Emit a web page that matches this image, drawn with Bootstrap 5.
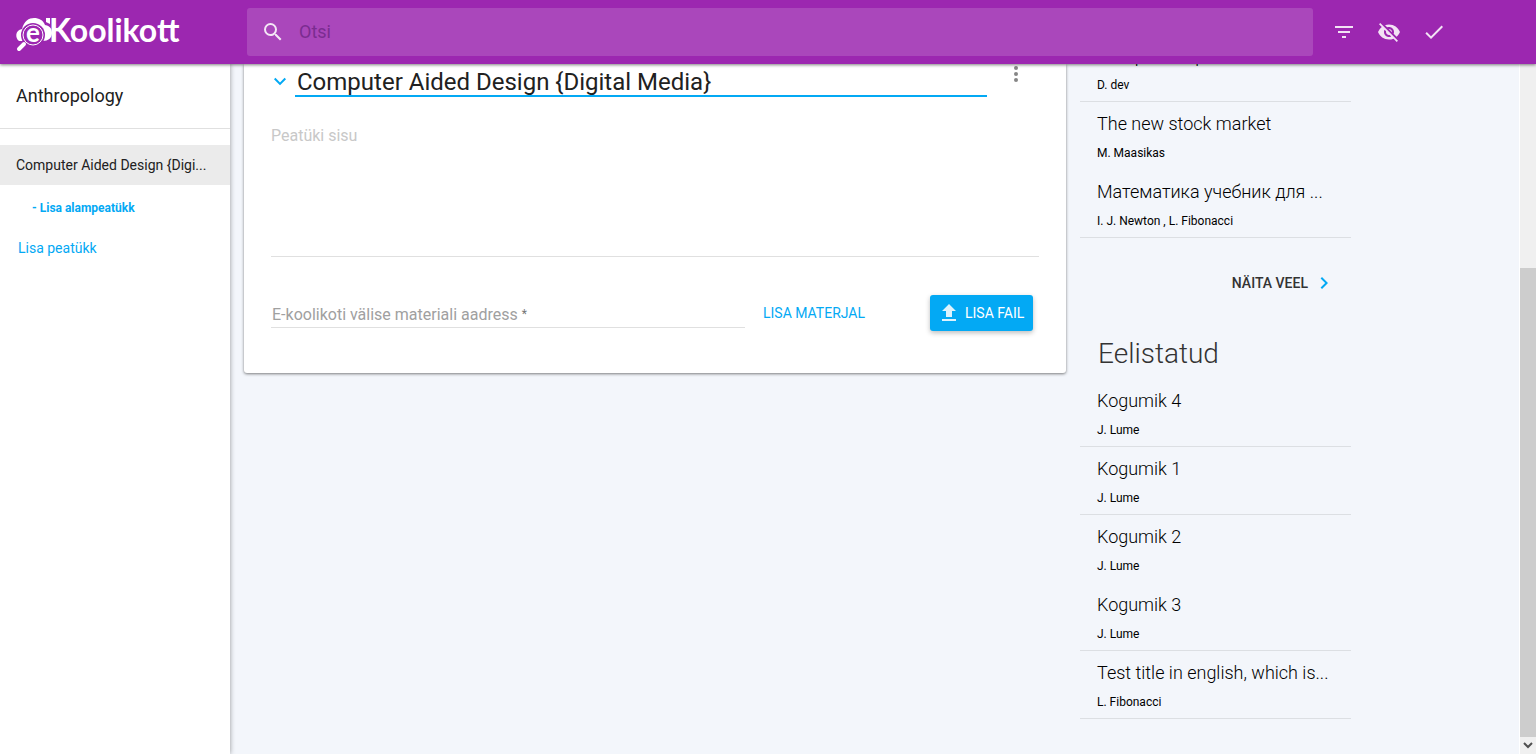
<!DOCTYPE html>
<html lang="et">
<head>
<meta charset="utf-8">
<meta name="viewport" content="width=device-width, initial-scale=1">
<title>e-Koolikott</title>
<link rel="stylesheet" href="https://cdn.jsdelivr.net/npm/bootstrap@5.3.0/dist/css/bootstrap.min.css">
<style>
body{font-family:Roboto,"Liberation Sans",sans-serif;font-size:14px;line-height:20px;color:#212121;background:#f3f6fb}
a{text-decoration:none}
.shell{height:100vh}
.topbar{height:64px;background:#9c27b0;box-shadow:0 1px 3px rgba(0,0,0,.5);z-index:10;color:#fff}
.brand-box{width:247px;padding-left:14px;color:#fff}
.brand-text{font-family:Lato,sans-serif;font-weight:700;font-size:32px;line-height:32px;margin-left:-5px;padding-bottom:4px}
.search-box{max-width:1066px;height:48px;background:rgba(255,255,255,.15);border-radius:3px;padding-left:14px}
.search-box input{font-size:18px;background:none;border:0;outline:0;padding:0 0 0 14px;color:#fff}
.search-box input::placeholder{color:#7b2c90;opacity:1}
.icon-btn{background:none;border:0;padding:0;width:24px;height:24px;line-height:0;color:#fff;opacity:.87}
.actions{padding-left:19px;gap:21px}
.accent{color:#03a9f4;opacity:1}
.side{width:230px;background:#fff;box-shadow:0 0 5px rgba(0,0,0,.4);z-index:2}
.side h2{font-size:18px;line-height:24px;font-weight:400;padding:20px 16px;margin:0;border-bottom:1px solid #e0e0e0}
.chapter{background:#ebebeb;color:#212121;height:40px;line-height:40px;padding:0 16px;margin-top:16px}
.sub-link{font-size:12px;font-weight:700;padding:13px 32px 0}
.add-link{font-size:14px;padding:20px 18px 0}
.stage{padding-left:14px;overflow:hidden}
.columns{max-width:1107px;gap:14px}
.sheet{background:#fff;border-radius:0 0 3px 3px;box-shadow:0 1px 3px rgba(0,0,0,.5);padding:0 27px 42px}
.fold{margin:6px 3px 0 -3px}
.dots{color:#757575;margin:-2px 0 0 17px}
.title-input{font-size:24px;line-height:28px;height:33px;border:0;border-bottom:2px solid #03a9f4;padding:4px 2px 0;outline:0;color:#212121;max-width:692px;border-radius:0}
.body-input{height:134px;margin-top:26px;border:0;border-bottom:1px solid #e0e0e0;padding:1px 0 0;resize:none;outline:0;font-size:16px;line-height:24px}
.body-input::placeholder{color:#c8c8c8}
.url-row{margin-top:38px}
.url-field{max-width:474px;height:33px}
.url-field input{border:0;border-bottom:1px solid #e0e0e0;outline:0;height:33px;padding:6px 1px 0;font-size:16px}
.url-field label{left:1px;top:8px;font-size:16px;line-height:24px;color:#a0a0a0;pointer-events:none}
.url-field label span{font-size:12px;line-height:16px;padding-left:4px;color:#757575;vertical-align:2px}
.flat{background:none;border:0;height:36px;padding:0;margin-left:18px}
.raised{background:#03a9f4;color:#fff;border:0;border-radius:3px;height:36px;width:103px;padding:0 0 0 7px;gap:4px;box-shadow:0 2px 5px rgba(0,0,0,.26);margin-right:6px}
.raised svg{opacity:.87}
.feed{width:271px;flex:none;margin-top:-30px}
.entry{display:block;color:#000;height:68px;padding:8px 16px 0 17px;border-bottom:1px solid transparent}
.entry.ruled{border-color:#dcdfe3}
.entry-title{font-size:18px;line-height:28px;font-weight:300}
.entry-by{font-size:12px;line-height:16px;margin-top:7px}
.more{height:89px;padding-right:15px;gap:4px;font-weight:500;color:#333}
.feed h3{font-size:28px;line-height:36px;font-weight:300;margin:9px 0 7px 18px;color:#333}
.scroller{width:17px;background:#f0f0f0;border-left:1px solid #fff}
.scroller .thumb{background:#cdcdcd;margin-top:204px}
</style>
</head>
<body>
<div class="shell d-flex flex-column overflow-hidden">
<header class="topbar d-flex align-items-center flex-shrink-0 position-relative">
<a href="#" class="brand-box d-flex align-items-center flex-shrink-0">
<svg width="40" height="40" viewBox="0 0 40 40" fill="#fff">
<path d="M5 29C1 26 1 18 8 17 10 9 15 6 20 6c5 0 9 2 11 7 6 1 7 5 7 8 0 5-4 8-9 8z"/>
<path d="M32 6h4v6l-4-2z"/>
<circle cx="19" cy="23" r="12" fill="#9c27b0"/>
<circle cx="19" cy="23" r="10" fill="none" stroke="#fff" stroke-width="1"/>
<path d="M11 31l-7 7" stroke="#9c27b0" stroke-width="7"/>
<path d="M10 32l-5 5" stroke="#fff" stroke-width="4" stroke-linecap="round"/>
<text x="19" y="30" text-anchor="middle" font-family="Lato,sans-serif" font-weight="700" font-size="26">e</text>
</svg>
<span class="brand-text">Koolikott</span></a>
<div class="search-box d-flex align-items-center flex-grow-1">
<button class="icon-btn" aria-label="Otsi"><svg width="24" height="24" viewBox="0 0 24 24" fill="currentColor"><path d="M15.5 14h-.79l-.28-.27A6.47 6.47 0 0 0 16 9.500 6.500 6.500 0 1 0 9.500 16c1.610 0 3.090-.590 4.230-1.570l.27.28v.79l5 4.990L20.490 19l-4.990-5zm-6 0a4.500 4.500 0 1 1 0-9 4.500 4.500 0 0 1 0 9z"/></svg></button>
<input type="text" class="flex-grow-1" placeholder="Otsi" aria-label="Otsi">
</div>
<div class="actions d-flex">
<button class="icon-btn" aria-label="Filter"><svg width="24" height="24" viewBox="0 0 24 24" fill="currentColor"><path d="M10 18h4v-2h-4v2zM3 6v2h18V6H3zm3 7h12v-2H6v2z"/></svg></button>
<button class="icon-btn" aria-label="Peida"><svg width="24" height="24" viewBox="0 0 24 24" fill="currentColor"><path d="M12 7c2.76 0 5 2.24 5 5 0 .65-.13 1.26-.36 1.83l2.92 2.92c1.51-1.26 2.7-2.89 3.43-4.75-1.73-4.39-6-7.5-11-7.5-1.4 0-2.74.25-3.98.7l2.16 2.16C10.74 7.13 11.35 7 12 7zM2 4.27l2.28 2.28.46.46A11.8 11.8 0 0 0 1 12c1.73 4.39 6 7.5 11 7.5 1.55 0 3.03-.3 4.38-.84l.42.42L19.73 22 21 20.73 3.27 3 2 4.27zM7.53 9.8l1.55 1.55c-.05.21-.08.43-.08.65 0 1.66 1.34 3 3 3 .22 0 .44-.03.65-.08l1.55 1.55c-.67.33-1.41.53-2.2.53-2.76 0-5-2.24-5-5 0-.79.2-1.53.53-2.2zm4.31-.78 3.15 3.15.02-.16c0-1.66-1.34-3-3-3l-.17.01z"/></svg></button>
<button class="icon-btn" aria-label="Valmis"><svg width="24" height="24" viewBox="0 0 24 24" fill="currentColor"><path d="M9 16.17 4.83 12l-1.42 1.41L9 19 21 7l-1.41-1.41z"/></svg></button>
</div>
</header>
<div class="d-flex flex-grow-1">
<nav class="side flex-shrink-0 d-flex flex-column position-relative">
<h2>Anthropology</h2>
<a href="#" class="chapter text-nowrap">Computer Aided Design {Digi...</a>
<a href="#" class="sub-link accent">- Lisa alampeatükk</a>
<a href="#" class="add-link accent">Lisa peatükk</a>
</nav>
<main class="stage flex-grow-1">
<div class="columns d-flex align-items-start">
<section class="sheet flex-grow-1">
<div class="d-flex">
<button class="icon-btn accent fold" aria-label="Ahenda"><svg width="24" height="24" viewBox="0 0 24 24" fill="currentColor"><path d="M7.41 7.84 12 12.42l4.59-4.58L18 9.25l-6 6-6-6z"/></svg></button>
<input class="title-input flex-grow-1" type="text" aria-label="Pealkiri" value="Computer Aided Design {Digital Media}">
<button class="icon-btn dots" aria-label="Menüü"><svg width="24" height="24" viewBox="0 0 24 24" fill="currentColor"><path d="M12 8a2 2 0 1 0 0-4 2 2 0 0 0 0 4zm0 2a2 2 0 1 0 0 4 2 2 0 0 0 0-4zm0 6a2 2 0 1 0 0 4 2 2 0 0 0 0-4z"/></svg></button>
</div>
<textarea class="body-input d-block w-100" placeholder="Peatüki sisu" aria-label="Peatüki sisu"></textarea>
<div class="url-row d-flex">
<div class="url-field flex-grow-1 position-relative"><input id="url" class="w-100" type="text"><label for="url" class="position-absolute">E-koolikoti välise materiali aadress<span>*</span></label></div>
<button class="flat accent">LISA MATERJAL</button>
<button class="raised ms-auto d-flex align-items-center"><svg width="24" height="24" viewBox="0 0 24 24" fill="currentColor"><path d="M9 16h6v-6h4l-7-7-7 7h4zm-4 2h14v2H5z"/></svg>LISA FAIL</button>
</div>
</section>
<aside class="feed">
<a href="#" class="entry ruled"><div class="entry-title">Computer repair</div><div class="entry-by">D. dev</div></a>
<a href="#" class="entry"><div class="entry-title">The new stock market</div><div class="entry-by">M. Maasikas</div></a>
<a href="#" class="entry ruled"><div class="entry-title">Математика учебник для ...</div><div class="entry-by">I. J. Newton , L. Fibonacci</div></a>
<a href="#" class="more d-flex align-items-center justify-content-end">NÄITA VEEL<svg class="accent" width="24" height="24" viewBox="0 0 24 24" fill="currentColor"><path d="M10 6 8.590 7.410 13.170 12l-4.580 4.590L10 18l6-6z"/></svg></a>
<h3>Eelistatud</h3>
<a href="#" class="entry ruled"><div class="entry-title">Kogumik 4</div><div class="entry-by">J. Lume</div></a>
<a href="#" class="entry ruled"><div class="entry-title">Kogumik 1</div><div class="entry-by">J. Lume</div></a>
<a href="#" class="entry"><div class="entry-title">Kogumik 2</div><div class="entry-by">J. Lume</div></a>
<a href="#" class="entry ruled"><div class="entry-title">Kogumik 3</div><div class="entry-by">J. Lume</div></a>
<a href="#" class="entry ruled"><div class="entry-title">Test title in english, which is...</div><div class="entry-by">L. Fibonacci</div></a>
</aside>
</div>
</main>
<div class="scroller d-flex flex-column flex-shrink-0"><div class="thumb flex-grow-1"></div><svg width="16" height="17" viewBox="0 0 16 17" fill="none" stroke="#505050" stroke-width="2"><path d="M4 6l4 4 4-4"/></svg></div>
</div>
</div>
<script src="https://cdn.jsdelivr.net/npm/bootstrap@5.3.0/dist/js/bootstrap.bundle.min.js"></script>
</body>
</html>
